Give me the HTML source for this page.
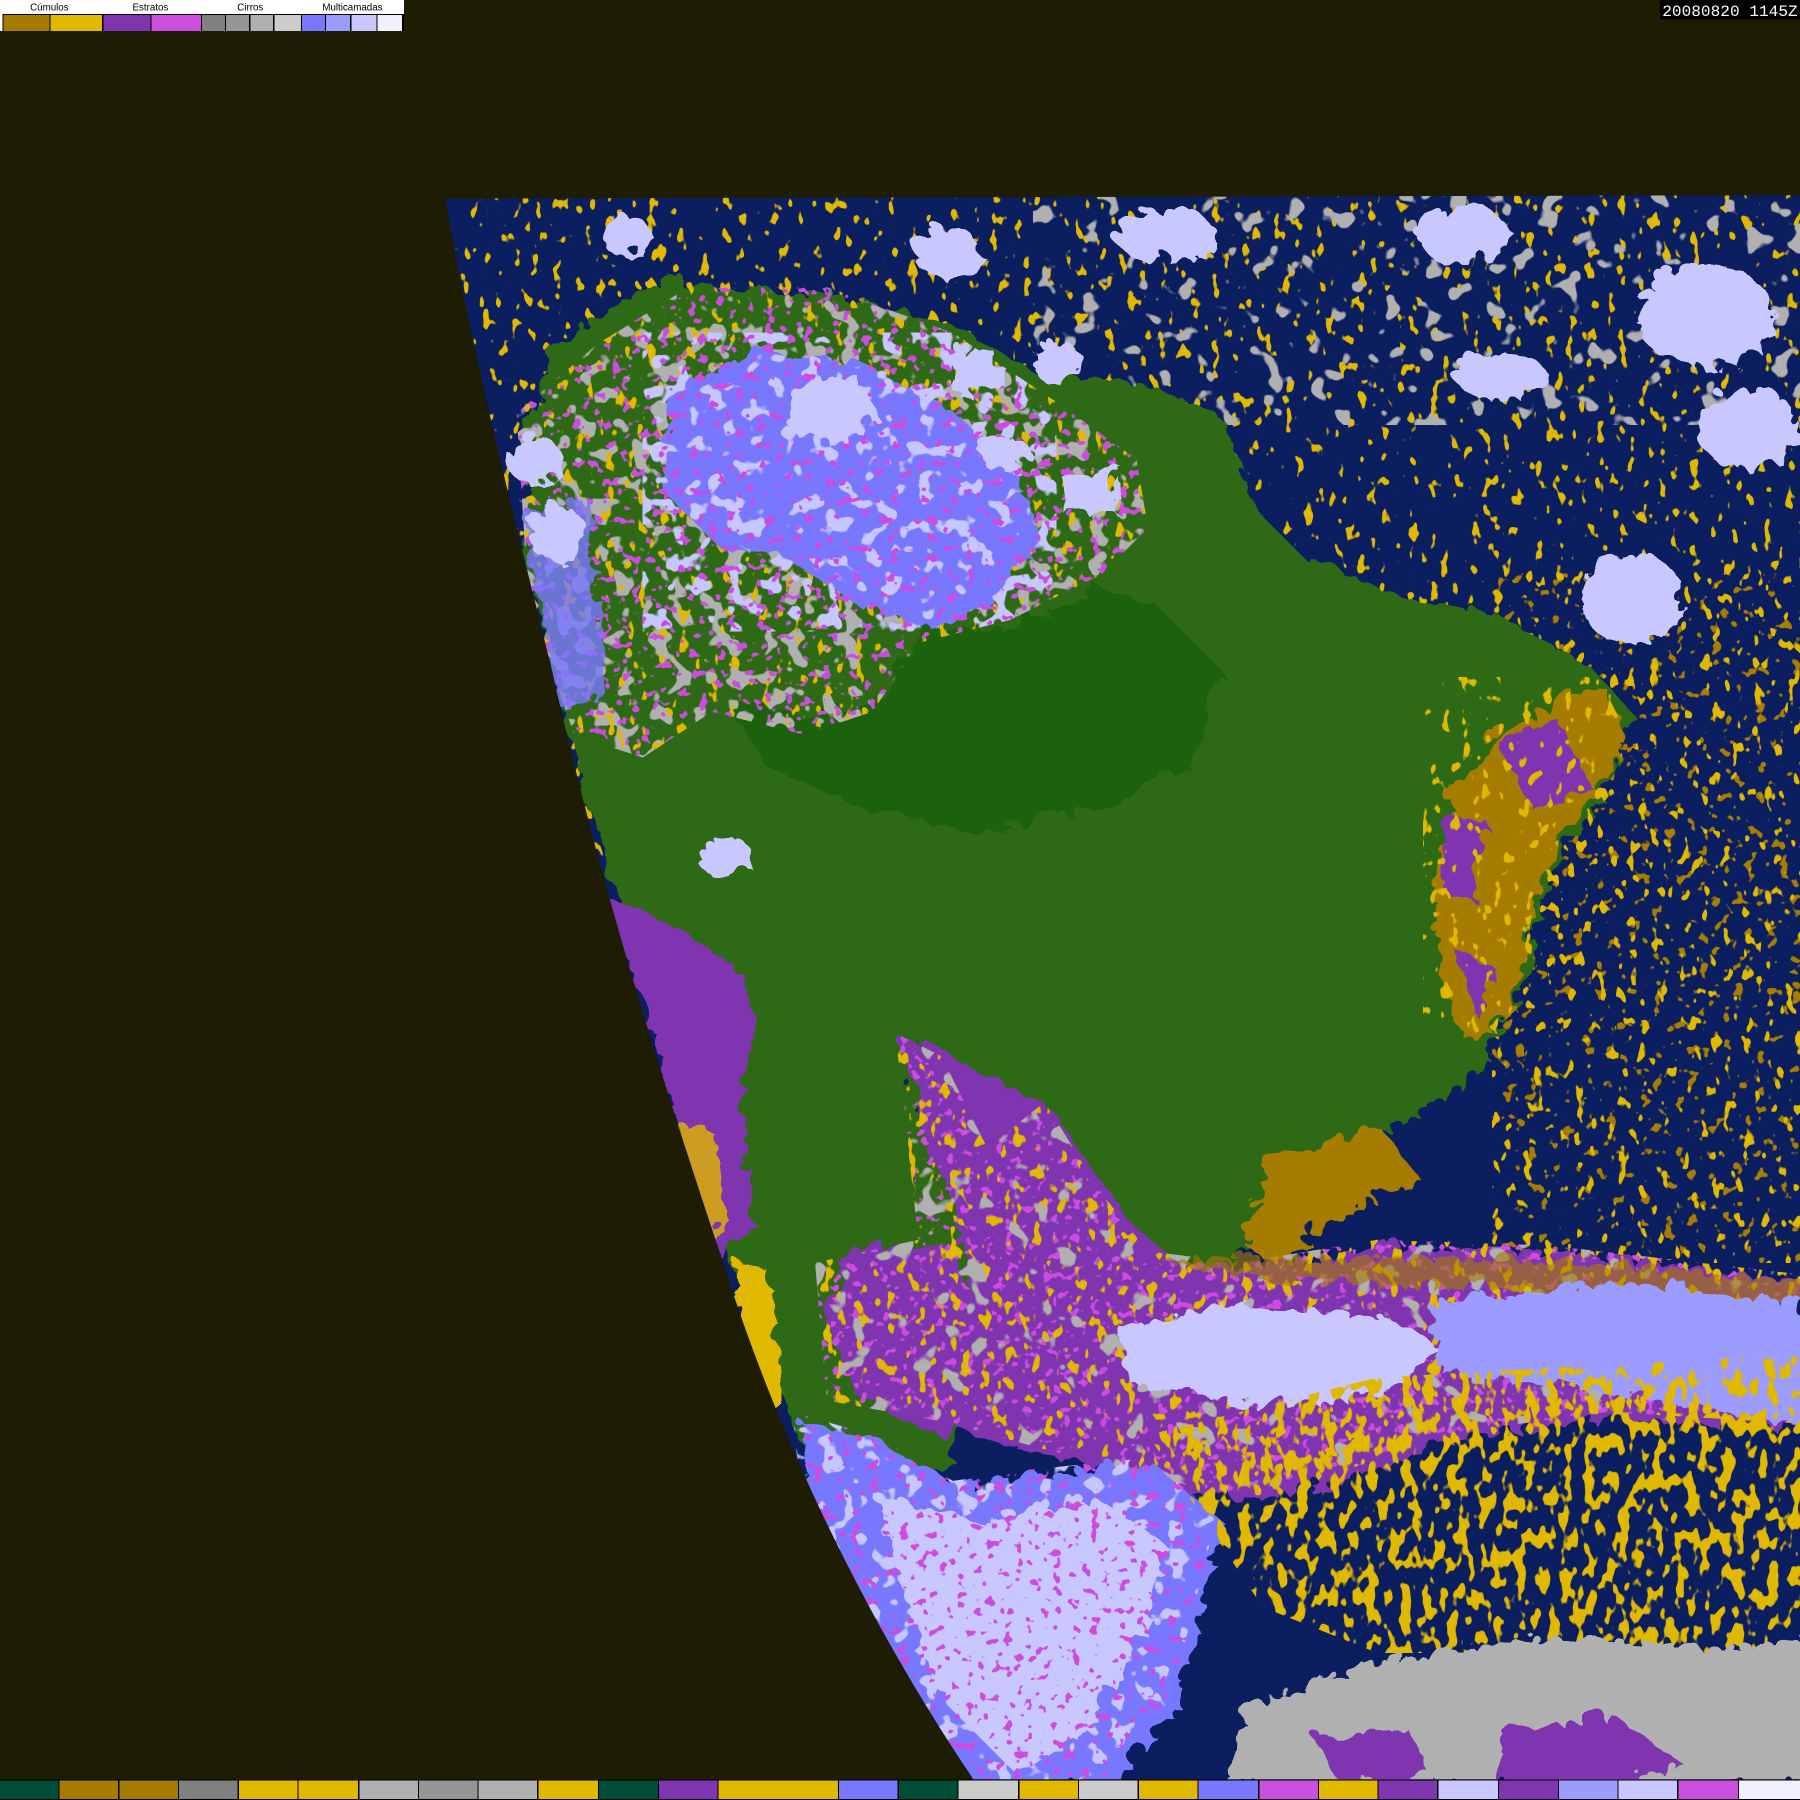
<!DOCTYPE html>
<html><head><meta charset="utf-8"><style>
html,body{margin:0;padding:0;background:#1e1c02;}
svg{display:block}
</style></head><body>
<svg width="1800" height="1800" viewBox="0 0 1568 1568" xmlns="http://www.w3.org/2000/svg" shape-rendering="crispEdges">
<defs>
<clipPath id="disk"><path d="M388,173 L1568,170 L1568,1550 L848,1550 C760,1420 680,1260 630,1100 C570,920 520,760 480,580 C440,420 410,300 388,173 Z"/></clipPath>
<filter id="yLo" x="0" y="0" width="100%" height="100%" color-interpolation-filters="sRGB">
<feTurbulence type="fractalNoise" baseFrequency="0.11 0.07" numOctaves="2" seed="3"/>
<feColorMatrix type="matrix" values="0 0 0 0 0.88  0 0 0 0 0.72  0 0 0 0 0  20 0 0 0 -12.9"/>
</filter>
<filter id="yMid" x="0" y="0" width="100%" height="100%" color-interpolation-filters="sRGB">
<feTurbulence type="fractalNoise" baseFrequency="0.11 0.07" numOctaves="2" seed="6"/>
<feColorMatrix type="matrix" values="0 0 0 0 0.88  0 0 0 0 0.72  0 0 0 0 0  20 0 0 0 -12.3"/>
</filter>
<filter id="yHi" x="0" y="0" width="100%" height="100%" color-interpolation-filters="sRGB">
<feTurbulence type="fractalNoise" baseFrequency="0.1 0.06" numOctaves="2" seed="4"/>
<feColorMatrix type="matrix" values="0 0 0 0 0.88  0 0 0 0 0.72  0 0 0 0 0  20 0 0 0 -10.6"/>
</filter>
<filter id="oLo" x="0" y="0" width="100%" height="100%" color-interpolation-filters="sRGB">
<feTurbulence type="fractalNoise" baseFrequency="0.1" numOctaves="2" seed="9"/>
<feColorMatrix type="matrix" values="0 0 0 0 0.65  0 0 0 0 0.49  0 0 0 0 0  20 0 0 0 -13"/>
</filter>
<filter id="lav" x="0" y="0" width="100%" height="100%" color-interpolation-filters="sRGB">
<feTurbulence type="fractalNoise" baseFrequency="0.06" numOctaves="2" seed="8"/>
<feColorMatrix type="matrix" values="0 0 0 0 0.78  0 0 0 0 0.78  0 0 0 0 1  20 0 0 0 -11.6"/>
</filter>
<filter id="gry" x="0" y="0" width="100%" height="100%" color-interpolation-filters="sRGB">
<feTurbulence type="fractalNoise" baseFrequency="0.06" numOctaves="2" seed="15"/>
<feColorMatrix type="matrix" values="0 0 0 0 0.69  0 0 0 0 0.69  0 0 0 0 0.69  20 0 0 0 -11.4"/>
</filter>
<filter id="gryLo" x="0" y="0" width="100%" height="100%" color-interpolation-filters="sRGB">
<feTurbulence type="fractalNoise" baseFrequency="0.05" numOctaves="2" seed="21"/>
<feColorMatrix type="matrix" values="0 0 0 0 0.69  0 0 0 0 0.69  0 0 0 0 0.69  20 0 0 0 -12.6"/>
</filter>
<filter id="mag" x="0" y="0" width="100%" height="100%" color-interpolation-filters="sRGB">
<feTurbulence type="fractalNoise" baseFrequency="0.12" numOctaves="2" seed="11"/>
<feColorMatrix type="matrix" values="0 0 0 0 0.8  0 0 0 0 0.3  0 0 0 0 0.88  20 0 0 0 -12.6"/>
</filter>
<filter id="rough"><feTurbulence baseFrequency="0.04" numOctaves="2" seed="5"/><feDisplacementMap in="SourceGraphic" scale="22"/></filter>
<clipPath id="cN"><path d="M450,360 L520,300 L600,250 L720,250 L830,290 L920,350 L990,400 L1000,460 L960,500 L880,540 L800,560 L760,620 L700,640 L620,620 L560,660 L500,640 L460,520 Z"/></clipPath>
<clipPath id="cS"><path d="M1000,1250 L1200,1200 L1568,1180 L1568,1440 L1200,1440 L1100,1400 Z"/></clipPath>
<clipPath id="cBand"><path d="M780,900 L820,920 L860,1000 L910,960 L960,1040 L1000,1090 L1080,1100 L1200,1080 L1350,1085 L1568,1110 L1568,1240 L1400,1230 L1250,1250 L1150,1290 L1060,1300 L980,1280 L900,1260 L830,1240 L720,1220 L710,1100 L800,1080 Z"/></clipPath>
<clipPath id="cLav"><path d="M690,1230 L760,1250 L830,1290 L900,1280 L1000,1270 L1060,1320 L1040,1400 L1020,1480 L960,1550 L840,1550 L760,1440 L700,1320 Z"/></clipPath>
</defs>
<rect width="1568" height="1568" fill="#1e1c02"/>
<g clip-path="url(#disk)">
<rect x="380" y="160" width="1200" height="1400" fill="#0a1e60"/>
<!-- ocean speckles -->
<rect x="380" y="170" width="1188" height="600" filter="url(#yLo)"/>
<rect x="900" y="170" width="668" height="200" filter="url(#gryLo)"/>
<rect x="1300" y="500" width="268" height="600" filter="url(#oLo)"/>
<rect x="1300" y="500" width="268" height="600" filter="url(#yLo)"/>
<!-- land -->
<path d="M800,900 L860,930 L930,960 L1000,1060 L1060,1110 L1000,1120 L900,1140 L830,1120 L800,1000 Z" fill="#8035b0"/>
<path filter="url(#rough)" d="M470,300 L560,240 L700,250 L820,275 L900,320 L1000,330 L1060,360 L1090,440 L1130,480 L1220,515 L1300,530 L1380,575 L1420,620 L1395,680 L1340,770 L1320,860 L1280,930 L1210,975 L1140,1010 L1110,1070 L1040,1110 L980,1060 L910,960 L850,930 L800,900 L790,960 L840,1080 L850,1180 L830,1250 L800,1310 L760,1330 L700,1270 L640,1130 L600,980 L560,860 L520,740 L480,600 L450,470 Z" fill="#2e6a14"/>
<path filter="url(#rough)" d="M600,560 L760,500 L900,490 L1000,520 L1060,580 L1030,660 L950,700 L850,720 L750,700 L660,660 Z" fill="#1f620a"/>
<!-- northern cloud region -->
<path filter="url(#rough)" d="M450,360 L520,300 L600,260 L700,250 L820,300 L900,360 L980,400 L1000,460 L960,500 L880,540 L800,540 L760,600 L700,620 L620,600 L560,640 L500,620 L460,520 Z" fill="#2e6a14"/>
<g clip-path="url(#cN)">
<rect x="440" y="240" width="580" height="430" filter="url(#gry)"/>
<rect x="440" y="240" width="580" height="430" filter="url(#yLo)"/>
<rect x="440" y="240" width="580" height="430" filter="url(#mag)"/>
</g>
<path filter="url(#rough)" d="M580,330 L650,300 L740,310 L820,350 L880,400 L900,470 L860,520 L800,540 L740,520 L680,480 L620,470 L570,420 Z" fill="#7878ff"/>
<g clip-path="url(#cN)"><rect x="560" y="290" width="360" height="260" filter="url(#lav)"/><rect x="560" y="290" width="360" height="260" filter="url(#mag)"/></g>
<path filter="url(#rough)" d="M680,330 L740,320 L760,360 L720,380 L680,370 Z M820,300 L860,300 L870,330 L830,340 Z M920,410 L970,400 L965,440 L920,440 Z" fill="#c8c8ff"/>
<path filter="url(#rough)" d="M450,440 L510,430 L520,600 L480,610 Z" fill="#7878ff" opacity="0.8"/>
<!-- top ocean clouds -->
<g filter="url(#rough)" fill="#c8c8ff">
<ellipse cx="540" cy="200" rx="22" ry="18"/><ellipse cx="820" cy="215" rx="30" ry="22"/><ellipse cx="915" cy="310" rx="22" ry="18"/>
<ellipse cx="1010" cy="200" rx="45" ry="22"/><ellipse cx="1270" cy="200" rx="40" ry="25"/><ellipse cx="1480" cy="270" rx="60" ry="45"/>
<ellipse cx="1415" cy="515" rx="45" ry="40"/><ellipse cx="870" cy="390" rx="22" ry="16"/><ellipse cx="625" cy="740" rx="24" ry="18"/>
<ellipse cx="1300" cy="320" rx="40" ry="20"/><ellipse cx="1520" cy="370" rx="45" ry="35"/><ellipse cx="460" cy="395" rx="25" ry="20"/>
<ellipse cx="480" cy="460" rx="25" ry="25"/>
</g>
<!-- Peru stratus -->
<path filter="url(#rough)" d="M515,770 L580,800 L640,840 L650,880 L640,960 L650,1060 L620,1090 L590,1000 L560,880 Z" fill="#8035b0"/>
<path filter="url(#rough)" d="M580,970 L615,980 L630,1060 L605,1080 Z" fill="#e0b800" opacity="0.8"/>
<path filter="url(#rough)" d="M632,1090 L662,1100 L676,1200 L662,1240 L642,1170 Z" fill="#e0b800"/>
<!-- NE Brazil coast -->
<path filter="url(#rough)" d="M1390,590 L1415,640 L1370,700 L1330,780 L1310,880 L1270,900 L1250,850 L1240,760 L1260,690 L1300,630 Z" fill="#a67c00"/>
<path filter="url(#rough)" d="M1300,640 L1350,620 L1380,680 L1330,700 Z M1250,700 L1290,710 L1280,780 L1250,770 Z M1260,820 L1300,840 L1280,880 Z" fill="#8035b0"/>
<rect x="1240" y="590" width="180" height="310" filter="url(#yLo)"/>
<!-- south brazil coast -->
<path filter="url(#rough)" d="M1100,1000 L1200,980 L1230,1020 L1150,1060 L1110,1100 L1080,1080 Z" fill="#a67c00"/>
<!-- southern band -->
<path filter="url(#rough)" d="M780,900 L820,920 L860,1000 L910,960 L960,1040 L1000,1090 L1080,1100 L1200,1080 L1350,1085 L1568,1110 L1568,1240 L1400,1230 L1250,1250 L1150,1290 L1060,1300 L980,1280 L900,1260 L830,1240 L800,1180 L840,1120 L820,1020 Z" fill="#8035b0"/>
<path filter="url(#rough)" d="M740,1080 L820,1080 L860,1160 L820,1250 L740,1210 L710,1140 Z" fill="#8035b0"/>
<g clip-path="url(#cBand)">
<rect x="700" y="890" width="868" height="420" filter="url(#mag)"/>
<rect x="700" y="890" width="868" height="420" filter="url(#yMid)"/>
<rect x="700" y="890" width="868" height="420" filter="url(#gryLo)"/>
</g>
<path filter="url(#rough)" d="M1000,1090 L1300,1090 L1568,1110 L1568,1130 L1300,1115 L1100,1112 Z" fill="#a67c00" opacity="0.6"/>
<path filter="url(#rough)" d="M970,1150 L1060,1130 L1200,1140 L1250,1170 L1200,1210 L1080,1220 L980,1200 Z" fill="#c8c8ff"/>
<path filter="url(#rough)" d="M1240,1130 L1400,1110 L1568,1130 L1568,1240 L1480,1220 L1350,1200 L1250,1190 Z" fill="#9c9cff"/>
<!-- southern lavender cloud -->
<path filter="url(#rough)" d="M690,1230 L760,1250 L830,1290 L900,1280 L1000,1270 L1060,1320 L1040,1400 L1020,1480 L960,1550 L840,1550 L760,1440 L700,1320 Z" fill="#7878ff"/>
<path filter="url(#rough)" d="M760,1300 L850,1320 L950,1300 L1010,1340 L990,1420 L940,1500 L880,1540 L820,1480 L780,1380 Z" fill="#c8c8ff"/>
<g clip-path="url(#cLav)"><rect x="680" y="1220" width="400" height="340" filter="url(#lav)"/><rect x="680" y="1220" width="400" height="340" filter="url(#mag)"/></g>
<!-- south ocean cumulus & gray -->
<g clip-path="url(#cS)"><rect x="980" y="1180" width="588" height="270" filter="url(#yHi)"/></g>
<path filter="url(#rough)" d="M1080,1480 L1200,1440 L1350,1420 L1480,1430 L1568,1420 L1568,1550 L1060,1550 Z" fill="#b0b0b0"/>
<path filter="url(#rough)" d="M1300,1500 L1400,1490 L1460,1530 L1400,1550 L1300,1550 Z M1140,1510 L1220,1500 L1240,1540 L1160,1548 Z" fill="#8035b0"/>
</g>
<!-- legend -->
<rect x="0" y="0" width="352" height="27" fill="#fff"/>
<g font-family="Liberation Sans, sans-serif" font-size="8.5" fill="#000" text-anchor="middle">
<text x="43" y="9">Cúmulos</text><text x="131" y="9">Estratos</text><text x="218" y="9">Cirros</text><text x="307" y="9">Multicamadas</text>
</g>
<rect x="2" y="12" width="350" height="15" fill="#000"/>
<rect x="3" y="13" width="40" height="14" fill="#a67c00"/><rect x="44" y="13" width="45" height="14" fill="#e0b800"/>
<rect x="90" y="13" width="41" height="14" fill="#8035b0"/><rect x="132" y="13" width="43" height="14" fill="#cc50e0"/>
<rect x="176" y="13" width="20" height="14" fill="#808080"/><rect x="197" y="13" width="20" height="14" fill="#969696"/><rect x="218" y="13" width="20" height="14" fill="#b0b0b0"/><rect x="239" y="13" width="23" height="14" fill="#cccccc"/>
<rect x="263" y="13" width="20" height="14" fill="#7878ff"/><rect x="284" y="13" width="21" height="14" fill="#9c9cff"/><rect x="306" y="13" width="22" height="14" fill="#c8c8ff"/><rect x="329" y="13" width="21" height="14" fill="#f0f0ff"/>
<!-- timestamp -->
<rect x="1446" y="0" width="122" height="17" fill="#000"/>
<text x="1507" y="14" font-family="Liberation Mono, monospace" font-size="13.5" fill="#fff" text-anchor="middle" textLength="118" lengthAdjust="spacingAndGlyphs">20080820 1145Z</text>
<!-- bottom strip -->
<rect x="0" y="1550" width="1568" height="18" fill="#000"/>
<g>
<rect x="0" y="1551" width="51" height="16" fill="#004d38"/>
<rect x="52" y="1551" width="51" height="16" fill="#a67c00"/>
<rect x="104" y="1551" width="51" height="16" fill="#a67c00"/>
<rect x="156" y="1551" width="51" height="16" fill="#808080"/>
<rect x="208" y="1551" width="51" height="16" fill="#e0b800"/>
<rect x="260" y="1551" width="52" height="16" fill="#e0b800"/>
<rect x="313" y="1551" width="51" height="16" fill="#b0b0b0"/>
<rect x="365" y="1551" width="51" height="16" fill="#969696"/>
<rect x="417" y="1551" width="51" height="16" fill="#b0b0b0"/>
<rect x="469" y="1551" width="52" height="16" fill="#e0b800"/>
<rect x="522" y="1551" width="51" height="16" fill="#004d38"/>
<rect x="574" y="1551" width="51" height="16" fill="#8035b0"/>
<rect x="626" y="1551" width="104" height="16" fill="#e0b800"/>
<rect x="731" y="1551" width="51" height="16" fill="#7878ff"/>
<rect x="783" y="1551" width="51" height="16" fill="#004d38"/>
<rect x="835" y="1551" width="52" height="16" fill="#cccccc"/>
<rect x="888" y="1551" width="51" height="16" fill="#e0b800"/>
<rect x="940" y="1551" width="51" height="16" fill="#cccccc"/>
<rect x="992" y="1551" width="51" height="16" fill="#e0b800"/>
<rect x="1044" y="1551" width="52" height="16" fill="#7878ff"/>
<rect x="1097" y="1551" width="51" height="16" fill="#cc50e0"/>
<rect x="1149" y="1551" width="51" height="16" fill="#e0b800"/>
<rect x="1201" y="1551" width="51" height="16" fill="#8035b0"/>
<rect x="1253" y="1551" width="52" height="16" fill="#c8c8ff"/>
<rect x="1306" y="1551" width="51" height="16" fill="#8035b0"/>
<rect x="1358" y="1551" width="51" height="16" fill="#9c9cff"/>
<rect x="1410" y="1551" width="51" height="16" fill="#c8c8ff"/>
<rect x="1462" y="1551" width="52" height="16" fill="#cc50e0"/>
<rect x="1515" y="1551" width="53" height="16" fill="#f0f0ff"/>
</g>
</svg>
</body></html>
